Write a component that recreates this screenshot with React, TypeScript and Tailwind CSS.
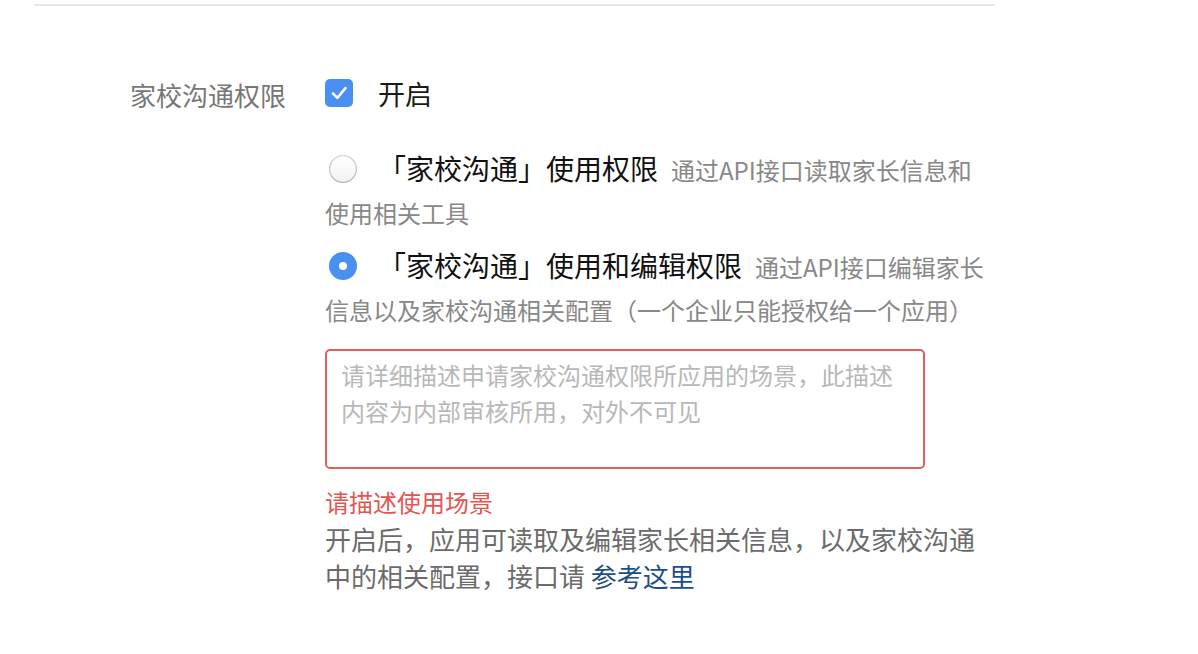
import React, { useState } from 'react';

function CheckIcon({ checked }: { checked: boolean }) {
  return (
    <svg width="28" height="28" viewBox="0 0 28 28" className="block shrink-0 -mt-[2px]">
      {checked ? (
        <>
          <rect x="0" y="0" width="28" height="28" rx="5" fill="#4a90f0" />
          <path d="M8 14.5 L12.3 18.8 L20.5 9.2" fill="none" stroke="#fff" strokeWidth="2.6" strokeLinecap="round" strokeLinejoin="round" />
        </>
      ) : (
        <rect x="0.5" y="0.5" width="27" height="27" rx="5" fill="#fff" stroke="#c8c8c8" />
      )}
    </svg>
  );
}

function RadioIcon({ checked }: { checked: boolean }) {
  return (
    <svg width="28" height="28" viewBox="0 0 28 28" className="inline-block align-[-3px] ml-[4px] mr-[21px]">
      <defs>
        <linearGradient id="radioStroke" x1="0" y1="0" x2="0" y2="1">
          <stop offset="0" stopColor="#d6d6d6" />
          <stop offset="1" stopColor="#b4b4b4" />
        </linearGradient>
        <linearGradient id="radioFill" x1="0" y1="0" x2="0" y2="1">
          <stop offset="0" stopColor="#ffffff" />
          <stop offset="1" stopColor="#f3f3f3" />
        </linearGradient>
      </defs>
      {checked ? (
        <>
          <circle cx="14" cy="14" r="14" fill="#4a90f0" />
          <circle cx="14" cy="14" r="4" fill="#fff" />
        </>
      ) : (
        <circle cx="14" cy="14" r="13.4" fill="url(#radioFill)" stroke="url(#radioStroke)" strokeWidth="1.2" />
      )}
    </svg>
  );
}

export default function App() {
  const [enabled, setEnabled] = useState(true);
  const [mode, setMode] = useState<'use' | 'edit'>('edit');
  const [desc, setDesc] = useState('');

  const options = [
    {
      key: 'use' as const,
      title: '「家校沟通」使用权限',
      hint: '通过API接口读取家长信息和使用相关工具',
    },
    {
      key: 'edit' as const,
      title: '「家校沟通」使用和编辑权限',
      hint: '通过API接口编辑家长信息以及家校沟通相关配置（一个企业只能授权给一个应用）',
    },
  ];

  return (
    <div className="min-h-screen bg-white font-['Noto_Sans_CJK_SC',sans-serif]">
      {/* divider */}
      <div className="ml-[34px] w-[961px] h-[2px] mt-[4px] bg-[#e6e6eb]" />

      <div className="flex items-center h-[44px] mt-[66px] pl-[130px]">
        <span className="w-[195px] text-[26px] text-[#777]">家校沟通权限</span>
        <button type="button" className="flex items-center gap-[25px]" onClick={() => setEnabled(!enabled)}>
          <CheckIcon checked={enabled} />
          <span className="text-[27px] text-[#1a1a1a]">开启</span>
        </button>
      </div>

      <div className="ml-[325px] w-[663px]">
        {options.map((opt, i) => (
          <p
            key={opt.key}
            className={`text-[28px] leading-[43px] text-[#111] cursor-pointer ${i === 0 ? 'mt-[31px]' : 'mt-[11px]'}`}
            onClick={() => setMode(opt.key)}
          >
            <RadioIcon checked={mode === opt.key} />
            {opt.title}
            <span className="ml-[13px] text-[24px] leading-[36px] text-[#888]">{opt.hint}</span>
          </p>
        ))}

        <textarea
          value={desc}
          onChange={(e) => setDesc(e.target.value)}
          placeholder="请详细描述申请家校沟通权限所应用的场景，此描述内容为内部审核所用，对外不可见"
          className="block mt-[19px] w-[600px] h-[120px] resize-none border-2 border-[#e0605b] rounded-[5px] pl-[14px] pr-[20px] pt-[6px] text-[24px] leading-[36px] text-[#333] placeholder:text-[#b8b8b8] outline-none"
        />

        <p className="mt-[15px] text-[24px] leading-[36px] text-[#e25550]">请描述使用场景</p>
        <p className="text-[26px] leading-[37px] text-[#6b6b6b]">
          开启后，应用可读取及编辑家长相关信息，以及家校沟通中的相关配置，接口请{' '}
          <a href="#" className="text-[#1d4e89]">参考这里</a>
        </p>
      </div>
    </div>
  );
}
